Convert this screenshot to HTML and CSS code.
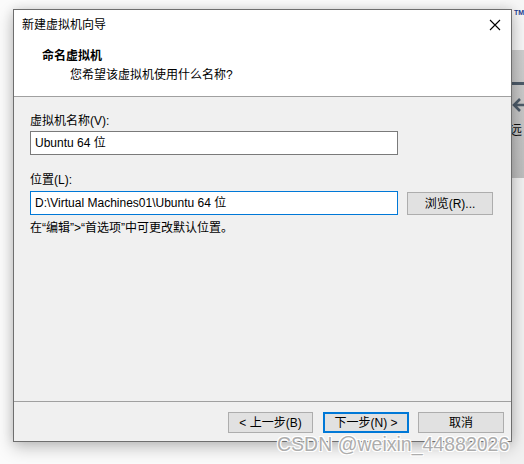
FILE: index.html
```html
<!DOCTYPE html>
<html lang="zh-CN">
<head>
<meta charset="utf-8">
<title>新建虚拟机向导</title>
<link rel="stylesheet" href="styles.css">
</head>
<body>
<div class="desktop">
  <div class="bgapp">
    <div class="bg-top"><span class="logo-arc"></span><span class="tm">TM</span></div>
    <div class="bg-band">
      <span class="dash"></span>
      <svg class="arrow" width="20" height="16" viewBox="0 0 20 16"><path d="M9 2 L3 8 L9 14 M3 8 H20" fill="none" stroke="#4d5b69" stroke-width="2.6"/></svg>
      <span class="far">远</span>
    </div>
    <div class="bg-rest"></div>
  </div>

  <div class="dialog">
    <div class="titlebar">
      <span class="title">新建虚拟机向导</span>
      <svg class="close" width="12" height="12" viewBox="0 0 12 12"><path d="M1 1 L11 11 M11 1 L1 11" stroke="#000" stroke-width="1.1" fill="none"/></svg>
    </div>
    <div class="header">
      <div class="h-title">命名虚拟机</div>
      <div class="h-sub">您希望该虚拟机使用什么名称?</div>
    </div>
    <div class="body">
      <div class="label">虚拟机名称(V):</div>
      <div class="input">Ubuntu 64 位</div>
      <div class="label second">位置(L):</div>
      <div class="row">
        <div class="input focused">D:\Virtual Machines01\Ubuntu 64 位</div>
        <div class="btn browse">浏览(R)...</div>
      </div>
      <div class="hint">在“编辑”&gt;“首选项”中可更改默认位置。</div>
    </div>
    <div class="footer">
      <div class="btn">&lt; 上一步(B)</div>
      <div class="btn default">下一步(N) &gt;</div>
      <div class="btn">取消</div>
    </div>
  </div>

  <div class="watermark">CSDN @weixin_44882026</div>
</div>
</body>
</html>
```

FILE: styles.css
```css
* { box-sizing: border-box; }
html, body { margin: 0; padding: 0; }
body {
  width: 524px;
  height: 464px;
  overflow: hidden;
  background: #fbfbfb;
  font-family: "Liberation Sans", "Noto Sans CJK SC", sans-serif;
  font-size: 12px;
  color: #000;
}
.desktop { position: relative; width: 524px; height: 464px; }

.bgapp {
  position: absolute;
  left: 500px; top: 0;
  width: 24px; height: 464px;
  display: flex; flex-direction: column;
}
.bg-top { height: 50px; background: #f6f6f6; position: relative; }
.tm {
  position: absolute; left: 14px; top: 9px;
  font-family: "Liberation Sans", sans-serif;
  font-size: 7px; line-height: 8px; font-weight: bold; color: #1d3c8f;
}
.logo-arc {
  position: absolute; left: 2px; top: 13px;
  width: 10px; height: 13px;
  border-right: 2px solid #1d3c8f; border-radius: 50%;
}
.bg-band {
  height: 128px;
  background: linear-gradient(#cdcdcd, #bdbdbd);
  position: relative;
}
.dash { position: absolute; left: 12px; top: 32px; width: 14px; height: 3px; background: #4d5b69; }
.arrow { position: absolute; left: 11px; top: 47px; }
.far { position: absolute; left: 9px; top: 72px; font-size: 13px; color: #111; line-height: 16px; }
.bg-rest { flex: 1; background: #f1f1f1; }

.dialog {
  position: absolute;
  left: 13px; top: 9px;
  width: 499px; height: 433px;
  border: 1px solid #6e6e6e;
  background: #f0f0f0;
  box-shadow: 0 6px 16px rgba(0,0,0,0.22), 0 0 10px rgba(0,0,0,0.12);
  display: flex; flex-direction: column;
}
.titlebar {
  height: 30px;
  background: #fff;
  display: flex; align-items: center; justify-content: space-between;
  padding: 0 10px 0 8px;
}
.title { line-height: 16px; }
.close { display: block; }
.header {
  height: 57px;
  background: #fff;
  border-bottom: 1px solid #a0a0a0;
  padding: 8px 0 0 28px;
}
.h-title { font-weight: bold; line-height: 17px; }
.h-sub { padding-left: 28px; line-height: 18px; margin-top: 1px; }

.body { flex: 1; padding: 16px 0 0 16px; }
.label { line-height: 16px; }
.label.second { margin-top: 17px; }
.input {
  margin-top: 2px;
  width: 368px; height: 24px;
  background: #fff;
  border: 1px solid #7a7a7a;
  padding: 0 4px;
  line-height: 22px;
  white-space: nowrap;
}
.input.focused { border-color: #0078d7; margin-top: 0; }
.row { display: flex; align-items: flex-start; gap: 9px; margin-top: 3px; }
.btn {
  width: 86px; height: 23px;
  background: #e1e1e1;
  border: 1px solid #adadad;
  display: flex; align-items: center; justify-content: center;
  line-height: 16px;
  white-space: nowrap;
}
.browse { margin-top: 1px; }
.hint { margin-top: 5px; line-height: 16px; }

.footer {
  height: 40px;
  border-top: 1px solid #a0a0a0;
  display: flex; justify-content: flex-end; align-items: flex-start;
  gap: 9px;
  padding: 10px 7px 0 0;
}
.footer .btn { height: 21px; width: 86px; }
.footer .btn:first-child { width: 85px; margin-right: 1px; }
.btn.default { border: 2px solid #0078d7; }

.watermark {
  position: absolute;
  left: 277px; top: 432px;
  font-family: "Liberation Sans", sans-serif;
  font-size: 19.5px;
  line-height: 24px;
  color: #adadad;
  text-shadow: 1px 1px 0 #fff, -1px -1px 0 #fff, 1px -1px 0 #fff, -1px 1px 0 #fff;
  white-space: nowrap;
}
```
